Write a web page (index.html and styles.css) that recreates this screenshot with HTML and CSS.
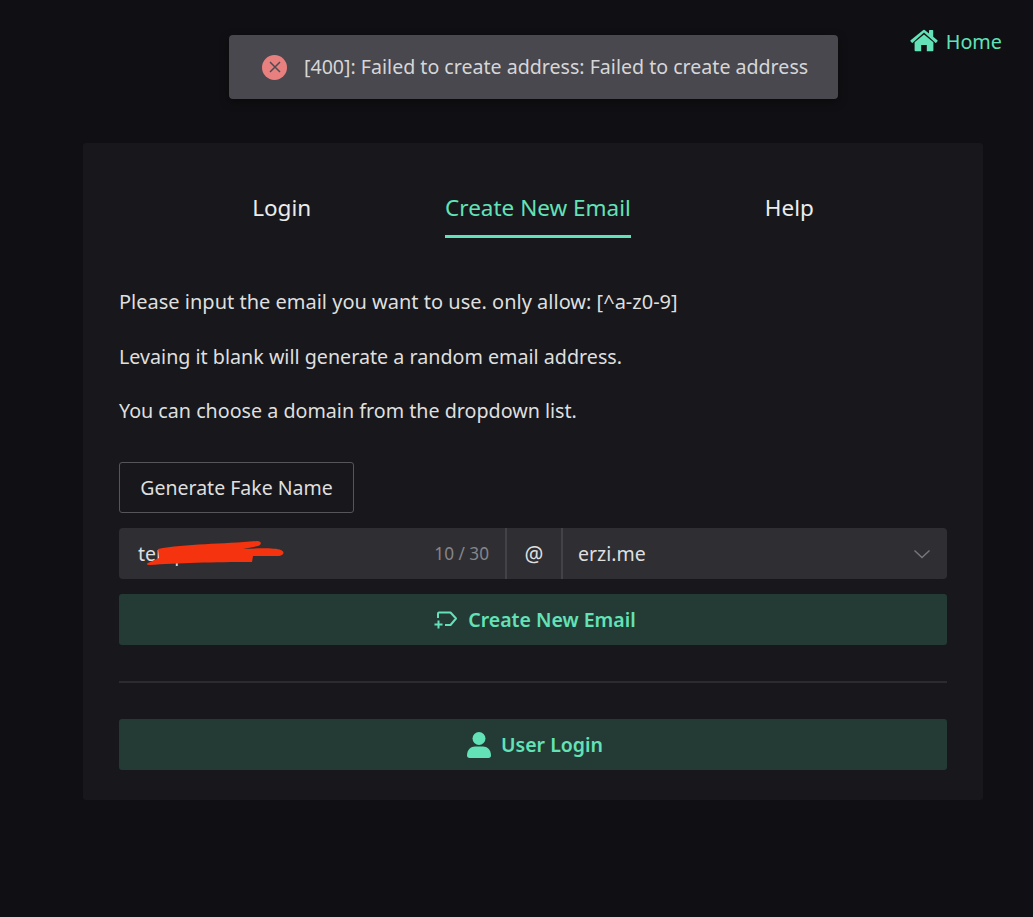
FILE: index.html
```html
<!DOCTYPE html>
<html lang="en">
<head>
    <meta charset="UTF-8">
    <title>Temp Email</title>
    <link rel="stylesheet" href="styles.css">
</head>
<body>
    <div class="toast">
        <span class="toast-icon">
            <svg width="12" height="12" viewBox="0 0 12 12"><path d="M1 1l10 10M11 1l-10 10" stroke="#4c4c52" stroke-width="1.500" fill="none"/></svg>
        </span>
        <span class="toast-text">[400]: Failed to create address: Failed to create address</span>
    </div>

    <div class="top-bar">
        <a class="home-link">
            <svg width="28" height="24" viewBox="0 0 28 24"><path fill="#63e2b7" d="M14 5.400L4.600 13.200V21.300a1 1 0 0 0 1 1h5.600v-6.300h5.600v6.300h5.600a1 1 0 0 0 1-1v-8.100zM27.400 11.300L23.200 7.800V1.600a.7.7 0 0 0-.7-.7h-2.800a.7.7 0 0 0-.7.7v2.900L15.300 1.400a2 2 0 0 0-2.600 0L.6 11.300a.7.7 0 0 0-.1 1l1.100 1.300a.7.7 0 0 0 1 .1L14 3.600l11.400 10.100a.7.7 0 0 0 1-.1l1.100-1.300a.7.7 0 0 0-.1-1z"/></svg>
            Home
        </a>
    </div>

    <div class="card">
        <div class="tabs">
            <div class="tab">Login</div>
            <div class="tab active">Create New Email</div>
            <div class="tab">Help</div>
        </div>

        <p class="hint hint-first">Please input the email you want to use. only allow: [^a-z0-9]</p>
        <p class="hint">Levaing it blank will generate a random email address.</p>
        <p class="hint">You can choose a domain from the dropdown list.</p>

        <button class="btn-outline">Generate Fake Name</button>

        <div class="address-group">
            <div class="name-input">
                <span class="name-value">temp</span>
                <svg class="scribble" width="140" height="30" viewBox="0 0 140 30"><path fill="#f5340f" d="M3 27L14 22L13 13C40 8 80 8 112 5C117 5 117 9 113 10L98 13C115 12 130 12 136 14C140 16 139 19 134 20L108 20L107 26C70 26 30 27 5 29C2 29 1 28 3 27z"/></svg>
                <span class="name-count">10 / 30</span>
            </div>
            <div class="at-sign">@</div>
            <div class="domain-select">
                <span>erzi.me</span>
                <svg width="18" height="10" viewBox="0 0 18 10"><path d="M1.500 1.500L9 8.500L16.500 1.500" stroke="#77777c" stroke-width="1.400" fill="none"/></svg>
            </div>
        </div>

        <button class="btn-green">
            <svg width="24" height="20" viewBox="0 0 24 20"><path d="M4 8V3.500a1 1 0 0 1 1-1h11.500l5.500 6l-5.500 6.500H11M.5 14.500h8M4.500 10.500v8" stroke="#63e2b7" stroke-width="2" fill="none" stroke-linejoin="round"/></svg>
            Create New Email
        </button>

        <div class="divider"></div>

        <button class="btn-green">
            <svg class="user-icon" width="24" height="28" viewBox="0 0 24 28"><circle cx="12" cy="7.500" r="6.500" fill="#63e2b7"/><path d="M0 24.500C0 18.500 4 15.500 8 15.500H16C20 15.500 24 18.500 24 24.500C24 26 23 27 21.500 27H2.500C1 27 0 26 0 24.500z" fill="#63e2b7"/></svg>
            User Login
        </button>
    </div>
</body>
</html>
```

FILE: styles.css
```css
body {
    margin: 0;
    height: 917px;
    background-color: #101014;
    color: #dfdfdf;
    font-family: "Noto Sans", "Open Sans", Arial, sans-serif;
    font-size: 19.5px;
    overflow: hidden;
}

.toast {
    position: absolute;
    left: 229px;
    top: 35px;
    width: 609px;
    height: 64px;
    box-sizing: border-box;
    padding-left: 33px;
    display: flex;
    align-items: center;
    gap: 17px;
    background-color: #48484e;
    border-radius: 4px;
    box-shadow: 0 3px 10px rgba(0, 0, 0, 0.4);
}

.toast-icon {
    width: 25px;
    height: 25px;
    border-radius: 50%;
    background-color: #e88080;
    display: flex;
    align-items: center;
    justify-content: center;
}

.toast-text {
    white-space: nowrap;
    color: #d6d6d8;
    font-size: 19.6px;
    padding-bottom: 2px;
}

.top-bar {
    display: flex;
    justify-content: flex-end;
    padding: 27px 31px 0 0;
    height: 143px;
    box-sizing: border-box;
}

.home-link {
    display: flex;
    align-items: center;
    gap: 8px;
    height: 28px;
    font-size: 19.8px;
    color: #63e2b7;
}

.card {
    width: 900px;
    height: 657px;
    margin-left: 83px;
    box-sizing: border-box;
    padding: 36px 36px 0;
    background-color: #18181c;
    border-radius: 3px;
}

.tabs {
    display: flex;
    justify-content: center;
    gap: 134px;
    margin-bottom: 50px;
}

.tab {
    height: 59px;
    box-sizing: border-box;
    padding-top: 13px;
    font-size: 22.5px;
    color: #ececec;
}

.tab.active {
    color: #63e2b7;
    border-bottom: 3px solid #63e2b7;
}

.hint {
    margin: 0 0 27.500px;
    height: 27px;
    line-height: 27px;
    font-size: 19.700px;
}

.hint-first {
    font-size: 20px;
}

.btn-outline {
    display: block;
    margin-top: 38px;
    width: 235px;
    height: 51px;
    background: none;
    border: 1px solid #55555a;
    border-radius: 3px;
    color: #dfdfdf;
    font: inherit;
}

.address-group {
    display: flex;
    height: 51px;
    margin-top: 15px;
    background-color: #2f2f33;
    border-radius: 4px;
}

.name-input {
    position: relative;
    width: 386px;
    box-sizing: border-box;
    padding: 0 16px 0 19px;
    display: flex;
    align-items: center;
    justify-content: space-between;
}

.scribble {
    position: absolute;
    left: 26px;
    top: 8px;
}

.name-count {
    font-size: 17.200px;
    color: #85858a;
}

.at-sign {
    width: 54px;
    display: flex;
    align-items: center;
    justify-content: center;
    border-left: 2px solid #434347;
    border-right: 2px solid #434347;
    font-size: 21px;
}

.domain-select {
    flex: 1;
    display: flex;
    align-items: center;
    justify-content: space-between;
    padding: 0 16px 0 15px;
}

.btn-green {
    display: flex;
    align-items: center;
    justify-content: center;
    gap: 10px;
    width: 100%;
    height: 51px;
    margin-top: 15px;
    padding-left: 10px;
    background-color: #243a35;
    border: none;
    border-radius: 3px;
    color: #63e2b7;
    font: inherit;
    font-weight: 600;
}

.divider {
    height: 2px;
    margin: 36px 0;
    background-color: #2c2c30;
}

.divider + .btn-green {
    margin-top: 0;
}
```
